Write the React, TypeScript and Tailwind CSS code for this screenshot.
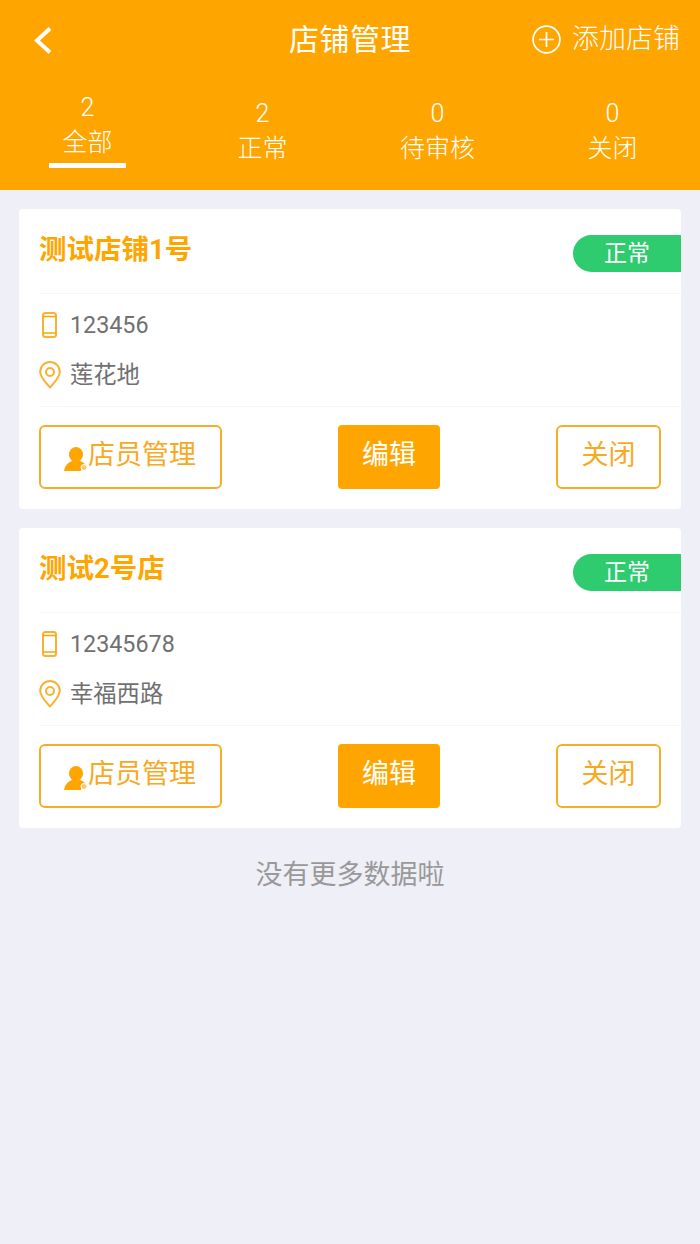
import React from "react";

const tabs = [
  { num: "2", label: "全部", active: true },
  { num: "2", label: "正常", active: false },
  { num: "0", label: "待审核", active: false },
  { num: "0", label: "关闭", active: false },
];

const shops = [
  { name: "测试店铺1号", phone: "123456", address: "莲花地" },
  { name: "测试2号店", phone: "12345678", address: "幸福西路" },
];

function PhoneIcon() {
  return (
    <svg width="15" height="26" viewBox="0 0 15 26" fill="none">
      <rect x="1" y="1" width="13" height="24" rx="2.5" stroke="#f8b133" strokeWidth="2" />
      <path d="M1 4.500h13M1 21h13" stroke="#ffa500" strokeWidth="1.500" />
      <circle cx="7.500" cy="23" r="1" fill="#fff" />
    </svg>
  );
}

function PinIcon() {
  return (
    <svg width="22" height="28" viewBox="0 0 22 28" fill="none">
      <path d="M11 26.500C6 20.500 1.200 16.500 1.200 10.800a9.800 9.800 0 0 1 19.600 0C20.800 16.500 16 20.500 11 26.500z" stroke="#f8b133" strokeWidth="2" strokeLinejoin="round" />
      <circle cx="11" cy="11" r="4" stroke="#f8b133" strokeWidth="2" />
    </svg>
  );
}

function StaffIcon() {
  return (
    <svg width="24" height="24" viewBox="0 0 24 24">
      <ellipse cx="12" cy="7.500" rx="7" ry="7.500" fill="#ffa500" />
      <path d="M0 24C1 19 3 16 8 14h8c3 1 5 2.500 6 5a5 5 0 0 0-5 5z" fill="#ffa500" />
      <circle cx="20" cy="20.500" r="3" fill="#f9c877" stroke="#fff" strokeWidth="1" />
    </svg>
  );
}

function ShopCard({ name, phone, address }: { name: string; phone: string; address: string }) {
  return (
    <div className="bg-white rounded-[4px] h-[300px] pl-5 flex flex-col">
      <div className="h-[85px] flex items-start justify-between border-b border-[#f7f7f7]">
        <div className="text-[27.5px] leading-[36px] mt-[23px] font-bold text-[#ffa500]">{name}</div>
        <div className="mt-[26px] w-[108px] h-[37px] bg-[#2ecb6f] rounded-l-full text-white text-[23px] leading-[37px] pl-[31px]">
          正常
        </div>
      </div>
      <div className="h-[113px] border-b border-[#f7f7f7] flex flex-col pt-[6px]">
        <div className="h-[50px] flex items-center text-[23.3px] text-[#707070]">
          <div className="w-[20px] mr-[11px] flex justify-center"><PhoneIcon /></div>
          {phone}
        </div>
        <div className="h-[50px] flex items-center text-[23.3px] text-[#707070]">
          <div className="w-[22px] mr-[9px] flex justify-center"><PinIcon /></div>
          {address}
        </div>
      </div>
      <div className="flex items-start justify-between pr-5 pt-[18px]">
        <div className="w-[183px] h-[64px] border-2 border-[#f5ad2c] rounded-[6px] flex items-center pl-[23px] text-[#f8a91f] text-[27px] pb-[4px]">
          <div className="mt-[8px]"><StaffIcon /></div>
          <span>店员管理</span>
        </div>
        <div className="w-[101.5px] h-[64px] bg-[#ffa500] rounded-[4px] flex items-center justify-center text-white text-[27px] pb-[4px]">
          编辑
        </div>
        <div className="w-[105px] h-[64px] border-2 border-[#f5ad2c] rounded-[6px] flex items-center justify-center text-[#f8a91f] text-[27px] pb-[4px]">
          关闭
        </div>
      </div>
    </div>
  );
}

export default function App() {
  return (
    <div className="w-[700px] h-[1244px] bg-[#efeff7] font-['Roboto','Noto_Sans_CJK_SC',sans-serif]">
      <div className="h-[190px] bg-[#ffa500] text-white">
        <div className="h-[78px] relative flex items-center justify-center">
          <svg className="absolute left-[33px] top-[26px]" width="20" height="29" viewBox="0 0 20 29" fill="none">
            <path d="M17 2.500L4 14.500l13 12" stroke="#fff" strokeWidth="4" />
          </svg>
          <div className="text-[30px] tracking-[0.500px]">店铺管理</div>
          <div className="absolute right-[20px] top-[19px] flex items-center text-[27px] font-light">
            <svg className="mr-[11px]" width="29" height="29" viewBox="0 0 29 29" fill="none">
              <circle cx="14.500" cy="14.500" r="13.400" stroke="#fff" strokeWidth="1.700" />
              <path d="M14.500 7v15M7 14.500h15" stroke="#fff" strokeWidth="1.700" />
            </svg>
            添加店铺
          </div>
        </div>
        <div className="grid grid-cols-4">
          {tabs.map((t) => (
            <div key={t.label} className={"flex flex-col items-center text-[25px] leading-[35px] font-light " + (t.active ? "pt-[12px]" : "pt-[18px]")}>
              <span>{t.num}</span>
              <span className="inline-block">{t.label}</span>
              {t.active && <div className="w-[77px] h-[5px] bg-white mt-[3px]" />}
            </div>
          ))}
        </div>
      </div>
      <div className="px-[19px] pt-[19px] flex flex-col gap-[19px]">
        {shops.map((s) => (
          <ShopCard key={s.name} {...s} />
        ))}
      </div>
      <div className="text-center text-[27px] text-[#999] mt-[27px]">没有更多数据啦</div>
    </div>
  );
}
